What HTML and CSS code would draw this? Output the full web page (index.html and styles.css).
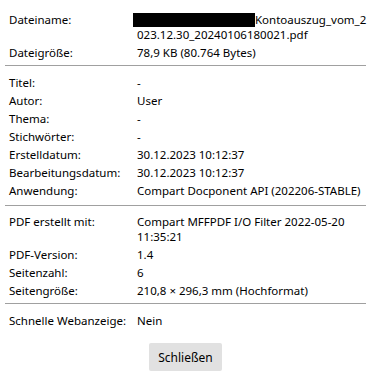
FILE: index.html
```html
<!DOCTYPE html>
<html lang="de">
<head>
    <meta charset="UTF-8">
    <meta name="viewport" content="width=device-width, initial-scale=1.0">
    <title>Dokumenteigenschaften</title>
    <link rel="stylesheet" href="styles.css">
</head>
<body>
    <div class="dialog">
        <div class="section file">
            <div class="row">
                <span class="label">Dateiname:</span>
                <span class="value"><span class="redacted"></span>Kontoauszug_vom_2<br>023.12.30_20240106180021.pdf</span>
            </div>
            <div class="row">
                <span class="label">Dateigröße:</span>
                <span class="value">78,9 KB (80.764 Bytes)</span>
            </div>
        </div>

        <div class="section meta">
            <div class="row"><span class="label">Titel:</span><span class="value">-</span></div>
            <div class="row"><span class="label">Autor:</span><span class="value">User</span></div>
            <div class="row"><span class="label">Thema:</span><span class="value">-</span></div>
            <div class="row"><span class="label">Stichwörter:</span><span class="value">-</span></div>
            <div class="row"><span class="label">Erstelldatum:</span><span class="value">30.12.2023 10:12:37</span></div>
            <div class="row"><span class="label">Bearbeitungsdatum:</span><span class="value">30.12.2023 10:12:37</span></div>
            <div class="row"><span class="label">Anwendung:</span><span class="value">Compart Docponent API (202206-STABLE)</span></div>
        </div>

        <div class="section pdf">
            <div class="row"><span class="label">PDF erstellt mit:</span><span class="value">Compart MFFPDF I/O Filter 2022-05-20<br>11:35:21</span></div>
            <div class="row"><span class="label">PDF-Version:</span><span class="value">1.4</span></div>
            <div class="row"><span class="label">Seitenzahl:</span><span class="value">6</span></div>
            <div class="row"><span class="label">Seitengröße:</span><span class="value">210,8 × 296,3 mm (Hochformat)</span></div>
        </div>

        <div class="section web">
            <div class="row"><span class="label">Schnelle Webanzeige:</span><span class="value">Nein</span></div>
        </div>

        <div class="actions">
            <button type="button">Schließen</button>
        </div>
    </div>
</body>
</html>
```

FILE: styles.css
```css
body {
    margin: 0;
    background: #fff;
    color: #000;
    font-family: "Noto Sans", "Open Sans", sans-serif;
    font-size: 11.5px;
}
.dialog {
    width: 361px;
    padding-left: 5px;
}
.section {
    display: flex;
    flex-direction: column;
    gap: 3px;
    border-bottom: 1px solid #a0a0a0;
}
.section.file {
    padding: 12px 0 5px;
}
.section.meta {
    padding: 9px 0 7px;
}
.section.pdf {
    padding: 8px 0 5px;
}
.section.web {
    padding: 9px 0 0;
    border-bottom: none;
}
.row {
    display: grid;
    grid-template-columns: 128px 1fr;
    padding-left: 4px;
    line-height: 15px;
}
.value {
    white-space: nowrap;
}
.redacted {
    display: inline-block;
    width: 122px;
    height: 14px;
    margin-left: -4px;
    background: #000;
    vertical-align: -3px;
}
.actions {
    display: flex;
    justify-content: center;
    padding-top: 15px;
}
button {
    font: inherit;
    font-size: 12px;
    width: 73px;
    height: 28px;
    background-color: #e1e1e1;
    color: #000;
    border: none;
    border-radius: 2px;
    cursor: pointer;
}
```
